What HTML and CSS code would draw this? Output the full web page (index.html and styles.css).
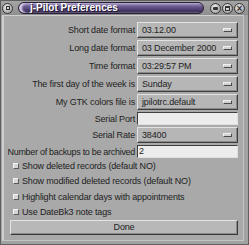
FILE: index.html
```html
<!DOCTYPE html>
<html lang="en">
<head>
    <link rel="stylesheet" href="styles.css">
</head>
<body>
    <div class="window">
        <div class="titlebar">
            <span class="tbtn"><span class="glyph-sq"></span></span>
            <div class="title">j-Pilot Preferences</div>
            <span class="tbtn"><span class="glyph-min"></span></span>
            <span class="tbtn"><span class="glyph-max"></span></span>
            <span class="tbtn"><span class="glyph-x">&times;</span></span>
        </div>
        <div class="content">
            <div class="form">
                <label>Short date format</label>
                <div class="combo"><span>03.12.00</span><i class="arrow"></i></div>

                <label>Long date format</label>
                <div class="combo"><span>03 December 2000</span><i class="arrow"></i></div>

                <label>Time format</label>
                <div class="combo"><span>03:29:57 PM</span><i class="arrow"></i></div>

                <label>The first day of the week is</label>
                <div class="combo"><span>Sunday</span><i class="arrow"></i></div>

                <label>My GTK colors file is</label>
                <div class="combo"><span>jpilotrc.default</span><i class="arrow"></i></div>

                <label>Serial Port</label>
                <div class="entry"></div>

                <label>Serial Rate</label>
                <div class="combo"><span>38400</span><i class="arrow"></i></div>

                <label class="tight">Number of backups to be archived</label>
                <div class="entry">2</div>
            </div>

            <div class="checks">
                <div class="check"><i class="box"></i>Show deleted records (default NO)</div>
                <div class="check"><i class="box"></i>Show modified deleted records (default NO)</div>
                <div class="check"><i class="box"></i>Highlight calendar days with appointments</div>
                <div class="check"><i class="box"></i>Use DateBk3 note tags</div>
            </div>

            <div class="done">Done</div>
        </div>
    </div>
</body>
</html>
```

FILE: styles.css
```css
*{
    box-sizing: border-box;
}
body{
    margin: 0;
    background: #8a8a8a;
    font-family: "Liberation Sans", Arial, sans-serif;
    font-size: 9px;
    letter-spacing: -0.15px;
    color: #222;
}
.window{
    width: 249px;
    height: 245px;
    background: #a2a2a2;
    border: 1px solid #606060;
    display: flex;
    flex-direction: column;
}
.titlebar{
    height: 14px;
    display: flex;
    align-items: center;
    padding: 0 3px 0 1px;
    gap: 1px;
    background: linear-gradient(#a4a4a4, #8e8e8e);
}
.tbtn{
    width: 11px;
    height: 11px;
    border-radius: 50%;
    background: radial-gradient(circle at 40% 35%, #f0f0f0, #a8a8a8 70%);
    border: 1px solid #3a3a3a;
    display: flex;
    align-items: center;
    justify-content: center;
    flex: none;
}
.glyph-sq{
    width: 4px;
    height: 4px;
    border: 1px solid #333;
}
.glyph-min{
    width: 5px;
    height: 3px;
    background: #333;
    border-radius: 1px;
}
.glyph-max{
    width: 5px;
    height: 5px;
    border: 1px solid #333;
    border-top-width: 2px;
}
.glyph-x{
    font-size: 10px;
    font-weight: bold;
    line-height: 9px;
    color: #333;
    letter-spacing: 0;
}
.title{
    flex: 1;
    height: 12px;
    margin: 0 5px 0 4px;
    border-radius: 6px;
    background: linear-gradient(#a89cc8, #6a5a90 35%, #4a3a6c 70%, #2e2244);
    border: 1px solid #2a2038;
    color: #fff;
    font-weight: bold;
    font-size: 10px;
    line-height: 10px;
    letter-spacing: 0;
    padding-left: 11px;
    text-shadow: 1px 1px 0 #20182e;
    box-shadow: inset 3px 0 2px #d8d0ea;
}
.content{
    flex: 1;
    background: #a9a9a9;
    border-top: 1px solid #cfcfcf;
    border-left: 2px solid #cfcfcf;
    border-right: 1px solid #c4c4c4;
    border-bottom: 1px solid #c4c4c4;
    margin: 0 4px 3px 1px;
    padding: 6px 5px 0 6px;
}
.form{
    display: grid;
    grid-template-columns: minmax(0, 1fr) 101px;
    column-gap: 2px;
    row-gap: 2px;
    align-items: center;
}
.form label{
    justify-self: end;
    white-space: nowrap;
}
.form .tight{
    letter-spacing: -0.3px;
}
.combo{
    height: 16px;
    display: flex;
    align-items: center;
    justify-content: space-between;
    padding: 0 5px 0 4px;
    background: #b6b6b6;
    border: 1px solid;
    border-color: #e2e2e2 #3e3e3e #3e3e3e #e2e2e2;
    box-shadow: inset -1px -1px 0 #8a8a8a;
}
.arrow{
    width: 9px;
    height: 4px;
    background: #d2d2d2;
    border: 1px solid;
    border-color: #f0f0f0 #4a4a4a #4a4a4a #f0f0f0;
}
.entry{
    height: 13px;
    background: #ececec;
    border: 1px solid;
    border-color: #3e3e3e #e0e0e0 #e0e0e0 #3e3e3e;
    padding-left: 1px;
    line-height: 11px;
}
.checks{
    padding-left: 3px;
}
.check{
    height: 15.5px;
    display: flex;
    align-items: center;
    gap: 3px;
    white-space: nowrap;
}
.box{
    width: 6px;
    height: 6px;
    background: #d6d6d6;
    border: 1px solid;
    border-color: #f4f4f4 #5a5a5a #5a5a5a #f4f4f4;
}
.done{
    height: 15px;
    background: #b8b8b8;
    border: 1px solid;
    border-color: #e4e4e4 #3a3a3a #3a3a3a #e4e4e4;
    box-shadow: inset -1px -1px 0 #888;
    text-align: center;
    line-height: 13px;
}
```
